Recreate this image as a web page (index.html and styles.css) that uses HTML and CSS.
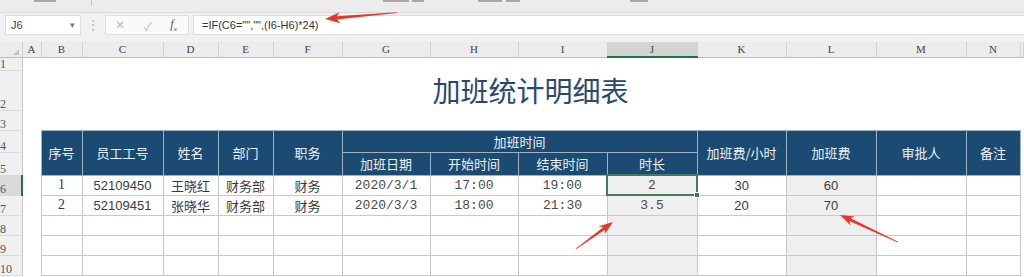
FILE: index.html
```html
<!DOCTYPE html>
<html lang="zh">
<head>
    <meta charset="UTF-8">
    <title>加班统计明细表</title>
    <link rel="stylesheet" href="styles.css">
</head>
<body>
    <!-- bottom edge of the ribbon, only slivers of its labels show -->
    <div class="ribbon">
        <span class="rb-bit rb-1"></span>
        <span class="rb-sep rb-s1"></span>
        <span class="rb-bit rb-2"></span>
        <span class="rb-bit rb-3"></span>
        <span class="rb-bit rb-4"></span>
        <span class="rb-bit rb-5"></span>
        <span class="rb-bit rb-6"></span>
    </div>

    <div class="formula-bar">
        <div class="name-box"><span>J6</span><span class="drop">&#9662;</span></div>
        <div class="grip">&#8942;</div>
        <div class="fx-buttons">
            <span class="btn-x">&#10005;</span>
            <span class="btn-ok">&#10003;</span>
            <span class="btn-fx">f<sub>x</sub></span>
        </div>
        <div class="formula-input">=IF(C6="","",(I6-H6)*24)</div>
    </div>

    <table class="sheet">
        <colgroup>
            <col class="w-rh">
            <col class="w-a"><col class="w-b"><col class="w-c"><col class="w-d"><col class="w-e"><col class="w-f">
            <col class="w-g"><col class="w-h"><col class="w-i"><col class="w-j"><col class="w-k"><col class="w-l">
            <col class="w-m"><col class="w-n"><col>
        </colgroup>
        <tr class="r-head">
            <th class="corner"><span class="tri"></span></th>
            <th class="ch">A</th><th class="ch">B</th><th class="ch">C</th><th class="ch">D</th><th class="ch">E</th>
            <th class="ch">F</th><th class="ch">G</th><th class="ch">H</th><th class="ch">I</th><th class="ch ch-sel">J</th>
            <th class="ch">K</th><th class="ch">L</th><th class="ch">M</th><th class="ch">N</th><th class="ch"></th>
        </tr>
        <tr class="r1">
            <th class="rh">1</th><td colspan="15"></td>
        </tr>
        <tr class="r2">
            <th class="rh">2</th><td></td>
            <td class="title" colspan="13">加班统计明细表</td><td></td>
        </tr>
        <tr class="r3">
            <th class="rh">3</th><td colspan="15"></td>
        </tr>
        <tr class="r4">
            <th class="rh">4</th><td></td>
            <td class="hd" rowspan="2">序号</td>
            <td class="hd" rowspan="2">员工工号</td>
            <td class="hd" rowspan="2">姓名</td>
            <td class="hd" rowspan="2">部门</td>
            <td class="hd" rowspan="2">职务</td>
            <td class="hd" colspan="4">加班时间</td>
            <td class="hd" rowspan="2">加班费/小时</td>
            <td class="hd" rowspan="2">加班费</td>
            <td class="hd" rowspan="2">审批人</td>
            <td class="hd" rowspan="2">备注</td>
            <td></td>
        </tr>
        <tr class="r5">
            <th class="rh">5</th><td></td>
            <td class="hd">加班日期</td>
            <td class="hd">开始时间</td>
            <td class="hd">结束时间</td>
            <td class="hd">时长</td>
            <td></td>
        </tr>
        <tr class="r-data">
            <th class="rh rh-sel">6</th><td></td>
            <td class="c serif">1</td><td class="c">52109450</td><td class="c cjk">王晓红</td><td class="c cjk">财务部</td>
            <td class="c cjk">财务</td><td class="c mono">2020/3/1</td><td class="c mono">17:00</td><td class="c mono">19:00</td>
            <td class="c mono calc sel">2</td><td class="c">30</td><td class="c calc">60</td><td class="c"></td><td class="c"></td><td></td>
        </tr>
        <tr class="r-data">
            <th class="rh">7</th><td></td>
            <td class="c serif">2</td><td class="c">52109451</td><td class="c cjk">张晓华</td><td class="c cjk">财务部</td>
            <td class="c cjk">财务</td><td class="c mono">2020/3/3</td><td class="c mono">18:00</td><td class="c mono">21:30</td>
            <td class="c mono calc">3.5</td><td class="c">20</td><td class="c calc">70</td><td class="c"></td><td class="c"></td><td></td>
        </tr>
        <tr class="r-data">
            <th class="rh">8</th><td></td>
            <td class="c"></td><td class="c"></td><td class="c"></td><td class="c"></td><td class="c"></td><td class="c"></td><td class="c"></td>
            <td class="c"></td><td class="c calc"></td><td class="c"></td><td class="c calc"></td><td class="c"></td><td class="c"></td><td></td>
        </tr>
        <tr class="r-data">
            <th class="rh">9</th><td></td>
            <td class="c"></td><td class="c"></td><td class="c"></td><td class="c"></td><td class="c"></td><td class="c"></td><td class="c"></td>
            <td class="c"></td><td class="c calc"></td><td class="c"></td><td class="c calc"></td><td class="c"></td><td class="c"></td><td></td>
        </tr>
        <tr class="r-data">
            <th class="rh">10</th><td></td>
            <td class="c"></td><td class="c"></td><td class="c"></td><td class="c"></td><td class="c"></td><td class="c"></td><td class="c"></td>
            <td class="c"></td><td class="c calc"></td><td class="c"></td><td class="c calc"></td><td class="c"></td><td class="c"></td><td></td>
        </tr>
    </table>

    <!-- red annotation arrows drawn over the sheet -->
    <svg class="arrows" width="1024" height="277" viewBox="0 0 1024 277">
        <g fill="#e8372c">
            <polygon transform="translate(325 19) rotate(175)" points="0,0 -15,-5.5 -12,-1.6 -72,-0.4 -72,0.4 -12,1.6 -15,5.5"/>
            <polygon transform="translate(613 222) rotate(-36)" points="0,0 -14,-5 -11,-1.5 -46,-0.4 -46,0.4 -11,1.5 -14,5"/>
            <polygon transform="translate(840 215) rotate(-155)" points="0,0 -14,-5 -11,-1.5 -64,-0.4 -64,0.4 -11,1.5 -14,5"/>
        </g>
    </svg>
</body>
</html>
```

FILE: styles.css
```css
body {
    margin: 0;
    width: 1024px;
    height: 277px;
    overflow: hidden;
    position: relative;
    background: #fff;
    font-family: "Liberation Sans", "Noto Sans CJK SC", sans-serif;
    color: #333;
}

/* ribbon strip at the very top, mostly cut off */
.ribbon {
    height: 13px;
    background: #ececec;
    border-bottom: 1px solid #dadada;
    box-sizing: border-box;
    position: relative;
    overflow: hidden;
}
.rb-bit {
    position: absolute;
    top: 0;
    height: 2px;
    background: #8a8a8a;
    opacity: 0.7;
}
.rb-1 { left: 34px; width: 22px; }
.rb-2 { left: 383px; width: 26px; }
.rb-3 { left: 412px; width: 12px; }
.rb-4 { left: 478px; width: 24px; }
.rb-5 { left: 506px; width: 14px; }
.rb-6 { left: 630px; width: 18px; }
.rb-sep {
    position: absolute;
    top: 0;
    width: 1px;
    height: 6px;
    background: #c4c4c4;
}
.rb-s1 { left: 91px; }

/* formula bar */
.formula-bar {
    height: 29px;
    background: #f1f1f1;
    display: flex;
    align-items: flex-start;
    padding-top: 2px;
    box-sizing: border-box;
}
.name-box {
    margin-left: 5px;
    width: 76px;
    height: 20px;
    background: #fff;
    border: 1px solid #dcdcdc;
    box-sizing: border-box;
    display: flex;
    align-items: center;
    justify-content: space-between;
    padding: 0 5px;
    font-size: 11px;
    color: #444;
}
.drop {
    font-size: 9px;
    color: #777;
}
.grip {
    width: 24px;
    text-align: center;
    font-size: 12px;
    line-height: 20px;
    color: #b5b5b5;
}
.fx-buttons {
    width: 84px;
    height: 20px;
    background: #fafafa;
    border: 1px solid #e0e0e0;
    box-sizing: border-box;
    display: flex;
    align-items: center;
    justify-content: space-around;
    padding: 0 2px 0 0;
}
.btn-x, .btn-ok {
    font-size: 12px;
    color: #c0c0c0;
}
.btn-fx {
    font-family: "Liberation Serif", serif;
    font-style: italic;
    font-size: 12px;
    color: #555;
}
.btn-fx sub {
    font-size: 7px;
}
.formula-input {
    margin-left: 4px;
    flex: 1;
    height: 20px;
    background: #fff;
    border: 1px solid #dcdcdc;
    border-right: none;
    box-sizing: border-box;
    padding-left: 8px;
    font-size: 11px;
    line-height: 18px;
    color: #333;
}

/* the worksheet grid */
.sheet {
    border-collapse: collapse;
    table-layout: fixed;
    width: 1024px;
}
.sheet th, .sheet td {
    padding: 0;
    line-height: 1;
}
.w-rh { width: 22px; }
.w-a { width: 19px; }
.w-b { width: 41px; }
.w-c { width: 81px; }
.w-d { width: 55px; }
.w-e { width: 55px; }
.w-f { width: 69px; }
.w-g { width: 88px; }
.w-h { width: 88px; }
.w-i { width: 89px; }
.w-j { width: 90px; }
.w-k { width: 89px; }
.w-l { width: 90px; }
.w-m { width: 90px; }
.w-n { width: 54px; }

.r-head { height: 15px; }
.r1 { height: 13px; }
.r2 { height: 40px; }
.r3 { height: 20px; }
.r4 { height: 22px; }
.r5 { height: 23px; }
.r-data { height: 20px; }

.corner {
    background: #ececec;
    border-bottom: 1px solid #bdbdbd;
    border-right: 1px solid #cfcfcf;
    position: relative;
}
.tri {
    position: absolute;
    right: 3px;
    bottom: 2px;
    width: 0;
    height: 0;
    border-left: 6px solid transparent;
    border-bottom: 6px solid #c2c2c2;
}
.ch {
    background: #ececec;
    border-bottom: 1px solid #bdbdbd;
    border-right: 1px solid #d2d2d2;
    font-family: "Liberation Serif", serif;
    font-weight: normal;
    font-size: 11px;
    color: #444;
}
.ch-sel {
    background: #d4d4d4;
    border-bottom: 2px solid #217346;
}
.rh {
    background: #f0f0f0;
    border-right: 1px solid #c6c6c6;
    border-bottom: 1px solid #d9d9d9;
    text-align: left;
    padding-left: 4px;
    vertical-align: bottom;
    padding-bottom: 1px;
    font-family: "Liberation Serif", serif;
    font-weight: normal;
    font-size: 12px;
    color: #555;
}
.rh-sel {
    background: #dadada;
    border-right: 2px solid #217346;
}

.title {
    text-align: center;
    vertical-align: middle;
    padding-top: 6px;
    font-family: "Noto Sans CJK SC", sans-serif;
    font-size: 28px;
    color: #28496c;
}

.hd {
    background: #1b4a72;
    border: 1px solid #9fb3c7;
    color: #eef2f6;
    text-align: center;
    font-family: "Noto Sans CJK SC", sans-serif;
    font-size: 13px;
}

.c {
    border: 1px solid #c8c8c8;
    text-align: center;
    font-size: 13px;
    color: #3a3a3a;
}
.cjk {
    font-family: "Noto Sans CJK SC", sans-serif;
}
.serif {
    font-family: "Liberation Serif", serif;
    font-size: 14px;
}
.mono {
    font-family: "Liberation Mono", monospace;
    color: #4a4a4a;
}
.calc {
    background: #efefef;
}
.sel {
    border: 2px solid #3f7d5a;
    position: relative;
}
.sel::after {
    content: "";
    position: absolute;
    right: -4px;
    bottom: -4px;
    width: 4px;
    height: 4px;
    background: #3f7d5a;
    border: 1px solid #fff;
}

.arrows {
    position: absolute;
    left: 0;
    top: 0;
    pointer-events: none;
}
```
